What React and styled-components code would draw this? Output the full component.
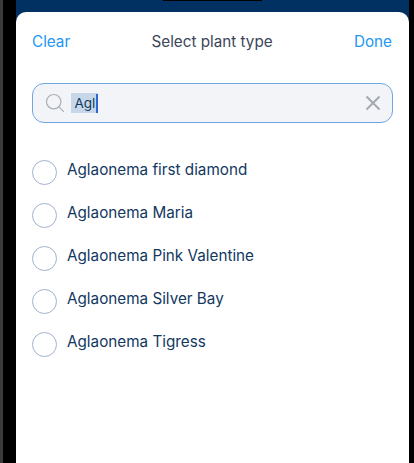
import React from "react";
import styled, { createGlobalStyle } from "styled-components";

const plants = [
  "Aglaonema first diamond",
  "Aglaonema Maria",
  "Aglaonema Pink Valentine",
  "Aglaonema Silver Bay",
  "Aglaonema Tigress",
];

const GlobalStyle = createGlobalStyle`
  html, body {
    margin: 0;
    padding: 0;
    height: 100%;
    background: #000;
    overflow: hidden;
  }
  #root {
    height: 100%;
  }
`;

const Frame = styled.div`
  height: 463px;
  width: 414px;
  display: flex;
  background: #000;
  font-family: Inter, "Liberation Sans", sans-serif;
`;

const Edge = styled.div`
  width: 3px;
  margin-right: 13px;
  background: #3b3b3b;
`;

const Screen = styled.div`
  position: relative;
  width: 393px;
  padding-top: 12px;
  box-sizing: border-box;
  background: #013062;
`;

const Notch = styled.div`
  position: absolute;
  top: 0;
  left: 147px;
  width: 99px;
  height: 1px;
  background: #000;
`;

const Sheet = styled.div`
  height: 100%;
  background: #fff;
  border-radius: 10px 10px 0 0;
  padding: 0 16px;
  box-sizing: border-box;
`;

const Header = styled.header`
  height: 58px;
  padding-right: 1px;
  display: flex;
  align-items: center;
  justify-content: space-between;
`;

const LinkButton = styled.button`
  border: 0;
  padding: 0;
  background: none;
  font: inherit;
  font-size: 15.25px;
  color: #2196f3;
`;

const Title = styled.h1`
  margin: 0;
  font-size: 15.25px;
  font-weight: 400;
  color: #3b4558;
`;

const SearchBox = styled.div`
  margin-top: 13px;
  height: 40px;
  box-sizing: border-box;
  display: flex;
  align-items: center;
  padding: 0 11px 0 12px;
  background: #f2f4f7;
  border: 1.3px solid #6fa5e2;
  border-radius: 12px;
`;

const SearchValue = styled.span`
  margin-left: 6px;
  height: 20px;
  padding: 0 0 0 3.5px;
  display: flex;
  align-items: center;
  background: #c6d7ea;
  font-size: 13.5px;
  color: #12385f;
`;

const Caret = styled.i`
  width: 2px;
  height: 19px;
  margin-left: 0.5px;
  background: #2f66d0;
`;

const ClearIcon = styled.svg`
  margin-left: auto;
`;

const PlantList = styled.ul`
  list-style: none;
  margin: 0;
  padding: 0;
  margin-top: 36px;
  display: flex;
  flex-direction: column;
  gap: 17px;
`;

const PlantRow = styled.li`
  height: 26px;
  display: flex;
  align-items: center;
  gap: 10px;
`;

const Radio = styled.span`
  width: 25px;
  height: 25px;
  box-sizing: border-box;
  border: 1.5px solid #a2b2cc;
  border-radius: 50%;
`;

const PlantName = styled.span`
  position: relative;
  top: -3px;
  font-size: 15.25px;
  color: #12385f;
`;

export default function App() {
  return (
    <>
      <GlobalStyle />
      <Frame>
        <Edge />
        <Screen>
          <Notch />
          <Sheet>
            <Header>
              <LinkButton>Clear</LinkButton>
              <Title>Select plant type</Title>
              <LinkButton>Done</LinkButton>
            </Header>
            <SearchBox>
              <svg width="20" height="20" viewBox="0 0 20 20" fill="none" stroke="#a9afb8" strokeWidth="1.2">
                <circle cx="8.7" cy="8.7" r="7.2" />
                <path d="M13.9 13.9 L18.4 18.4" strokeLinecap="round" />
              </svg>
              <SearchValue>
                Agl
                <Caret />
              </SearchValue>
              <ClearIcon width="16" height="16" viewBox="0 0 16 16" fill="none" stroke="#a4a9b1" strokeWidth="2">
                <path d="M1.5 1.5 L14.5 14.5 M14.5 1.5 L1.5 14.5" />
              </ClearIcon>
            </SearchBox>
            <PlantList>
              {plants.map((name) => (
                <PlantRow key={name}>
                  <Radio />
                  <PlantName>{name}</PlantName>
                </PlantRow>
              ))}
            </PlantList>
          </Sheet>
        </Screen>
      </Frame>
    </>
  );
}
